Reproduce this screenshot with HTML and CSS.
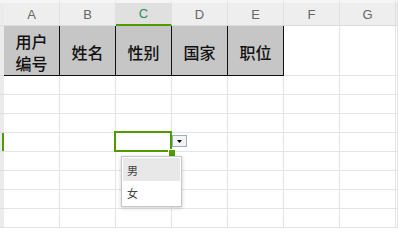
FILE: index.html
```html
<!DOCTYPE html>
<html lang="zh">
<head>
<meta charset="utf-8">
<link rel="stylesheet" href="styles.css">
</head>
<body>
<div class="sheet">
  <div class="gut corner"></div>
  <div class="colh">A</div><div class="colh">B</div><div class="colh sel">C</div><div class="colh">D</div><div class="colh">E</div><div class="colh">F</div><div class="colh">G</div><div class="colh"></div>

  <div class="gut"></div>
  <div class="hd">用户<br>编号</div><div class="hd">姓名</div><div class="hd">性别</div><div class="hd">国家</div><div class="hd">职位</div><div></div><div></div><div></div>

  <div class="gut"></div>
  <div></div><div></div><div></div><div></div><div></div><div></div><div></div><div></div>

  <div class="gut"></div>
  <div></div><div></div><div></div><div></div><div></div><div></div><div></div><div></div>

  <div class="gut"></div>
  <div></div><div></div><div></div><div></div><div></div><div></div><div></div><div></div>

  <div class="gut gut-sel"></div>
  <div></div><div></div>
  <div class="cur">
    <span class="handle"></span>
    <span class="dd-btn"><svg width="7" height="4" viewBox="0 0 7 4"><polygon points="0,0 7,0 3.5,4" fill="#000"/></svg></span>
    <ul class="dd-list">
      <li class="dd-item active">男</li>
      <li class="dd-item">女</li>
    </ul>
  </div>
  <div></div><div></div><div></div><div></div><div></div>

  <div class="gut"></div>
  <div></div><div></div><div></div><div></div><div></div><div></div><div></div><div></div>

  <div class="gut"></div>
  <div></div><div></div><div></div><div></div><div></div><div></div><div></div><div></div>

  <div class="gut"></div>
  <div></div><div></div><div></div><div></div><div></div><div></div><div></div><div></div>

  <div class="gut"></div>
  <div></div><div></div><div></div><div></div><div></div><div></div><div></div><div></div>
</div>
</body>
</html>
```
FILE: styles.css
```css
html, body {
  margin: 0;
  background: #fff;
  overflow: hidden;
  font-family: "Liberation Sans", Arial, sans-serif;
}

.sheet {
  display: grid;
  grid-template-columns: 4px repeat(7, 56px) 1fr;
  grid-template-rows: 26px 50px repeat(8, 19px);
  width: 398px;
}

.sheet > div {
  box-sizing: border-box;
  border-right: 1px solid #e4e4e4;
  border-bottom: 1px solid #e4e4e4;
}

.sheet > .gut {
  background: #ebebeb;
  border-right: none;
  border-bottom-color: #dedede;
}

.sheet > .corner {
  border-top: 3px solid #f5f5f5;
}

.sheet > .gut-sel {
  box-shadow: inset -2px 0 0 #4f9c00;
}

.sheet > .colh {
  background: #eeeeee;
  border-top: 3px solid #f5f5f5;
  border-bottom-color: #dcdcdc;
  border-right-color: #e0e0e0;
  display: flex;
  align-items: center;
  justify-content: center;
  color: #666;
  font-size: 13px;
}

.sheet > .colh.sel {
  background: #e0e0e0;
  color: #1f9059;
  border-bottom: 2px solid #4f9c00;
}

.sheet > .hd {
  background: #c6c6c6;
  border-right: 1px solid #111;
  border-bottom: 1px solid #111;
  display: flex;
  align-items: center;
  justify-content: center;
  text-align: center;
  padding-top: 2px;
  font-family: "Noto Sans CJK SC", sans-serif;
  font-size: 16px;
  font-weight: 500;
  line-height: 22px;
  color: #111;
}

.sheet > .cur {
  position: relative;
}

.cur::before {
  content: "";
  position: absolute;
  left: -2px;
  top: -2px;
  right: -1px;
  bottom: -1px;
  border: 2px solid #4f9c00;
}

.handle {
  position: absolute;
  left: 52px;
  top: 16px;
  width: 6px;
  height: 6px;
  background: #4f9c00;
  border-left: 1px solid #fff;
  border-top: 1px solid #fff;
  z-index: 2;
}

.dd-btn {
  position: absolute;
  left: 56px;
  top: 2px;
  width: 15px;
  height: 12px;
  box-sizing: border-box;
  border: 1px solid #9cadc4;
  background: #f4f4f4;
  display: flex;
  align-items: center;
  justify-content: center;
  z-index: 2;
}

.dd-btn svg {
  display: block;
  margin-top: 1px;
  width: 5px;
  height: 3px;
}

.dd-list {
  position: absolute;
  left: 5px;
  top: 23px;
  width: 61px;
  margin: 0;
  padding: 1px;
  list-style: none;
  box-sizing: border-box;
  background: #fff;
  border: 1px solid #c6c6c6;
  box-shadow: 0 1px 4px rgba(0, 0, 0, 0.2);
  z-index: 3;
}

.dd-item {
  height: 24px;
  line-height: 24px;
  padding-left: 4px;
  font-family: "Noto Sans CJK SC", sans-serif;
  font-size: 11px;
  color: #444;
}

.dd-item.active {
  background: #e8e8e8;
  height: 23px;
}
```
